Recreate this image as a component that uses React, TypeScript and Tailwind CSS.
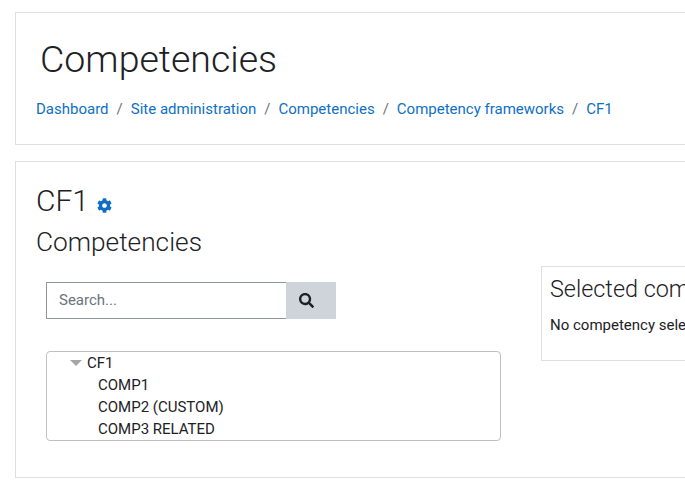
import { FaCog, FaSearch } from "react-icons/fa";

const crumbs = ["Dashboard", "Site administration", "Competencies", "Competency frameworks", "CF1"];
const children = ["COMP1", "COMP2 (CUSTOM)", "COMP3 RELATED"];

export default function App() {
  return (
    <div className="h-[503px] w-[685px] overflow-hidden bg-white font-['Roboto',sans-serif] text-[15px] text-[#1d2125]">
      <div className="ml-[15px] mt-3 h-[133px] w-[800px] border border-[#dfdfdf] pl-5 pt-[19px]">
        <h1 className="ml-1 text-[37.5px] font-light leading-[54px]">Competencies</h1>
        <nav className="mt-[12px] flex items-center leading-[22px]">
          {crumbs.map((c, i) => (
            <span key={c} className="flex items-center">
              {i > 0 && <span className="px-2 text-[#6a737b]">/</span>}
              <a className="text-[#0f6fc5]">{c}</a>
            </span>
          ))}
        </nav>
      </div>

      <div className="ml-[15px] mt-4 h-[317px] w-[800px] border border-[#dfdfdf] pl-5 pt-[19px]">
        <div className="flex items-center">
          <h2 className="text-[30px] font-light leading-[40px]">CF1</h2>
          <FaCog className="ml-[8px] mt-[9px] h-[15px] w-[15px] text-[#0f6fc5]" />
        </div>
        <h3 className="mt-[2px] text-[26.25px] font-light leading-[38px]">Competencies</h3>

        <div className="mt-[21px] flex">
          <div className="ml-[10px] w-[455px] shrink-0">
            <div className="flex h-[37px] w-[290px]">
              <div className="flex w-[240px] items-center border border-r-0 border-[#8f959e] pl-3 text-[#6a737b]">Search...</div>
              <div className="flex w-[50px] items-center bg-[#ced4da] pl-[13px]">
                <FaSearch className="h-[15px] w-[15px] text-[#1d2125]" />
              </div>
            </div>
            <div className="mt-8 h-[90px] rounded border border-[#bfbfbf] leading-[22px]">
              <div className="flex items-center pl-[23px]">
                <span className="h-0 w-0 border-x-[6px] border-t-[6px] border-x-transparent border-t-[#a6a6a6]" />
                <span className="ml-[5px]">CF1</span>
              </div>
              {children.map((c) => (
                <div key={c} className="pl-[51px]">{c}</div>
              ))}
            </div>
          </div>

          <div className="ml-[40px] -mt-4 h-[95px] w-[300px] shrink-0 border border-[#dfdfdf] pl-2 pt-[7px]">
            <h4 className="text-[23.4px] font-light leading-[30px]">Selected competency</h4>
            <p className="mt-[10px] leading-[22px]">No competency selected</p>
          </div>
        </div>
      </div>
    </div>
  );
}
